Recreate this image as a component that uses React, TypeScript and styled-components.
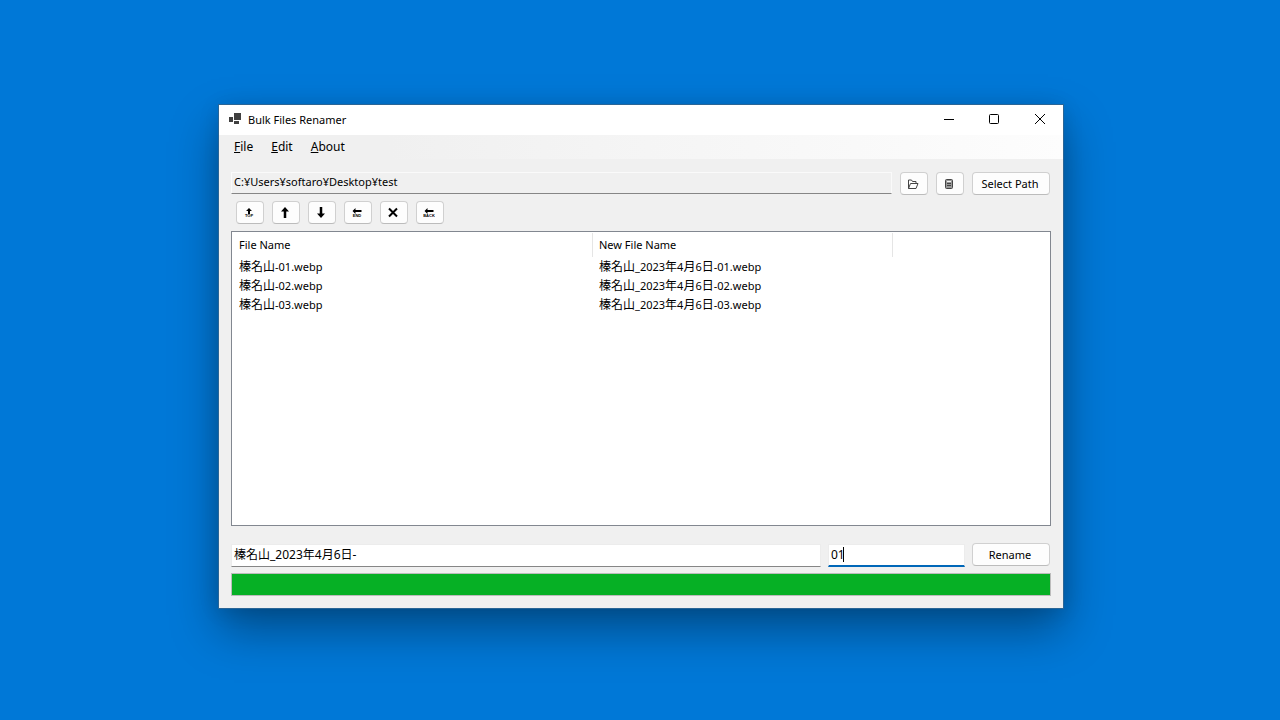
import React from 'react';
import styled, { createGlobalStyle } from 'styled-components';

const Global = createGlobalStyle`
  * { box-sizing: border-box; }
  body { margin: 0; background: #0078d7; }
  body, button, input {
    font-family: "Noto Sans", "Noto Sans CJK JP", sans-serif;
    font-size: 11px;
    line-height: 16px;
    color: #000;
  }
  svg { display: block; flex: none; }
`;

const Desktop = styled.main`
  display: flex;
  min-height: 100vh;
  padding: 105px 217px 112px 219px;
  background: #0078d7;
`;

const Window = styled.section`
  flex: 1;
  display: flex;
  flex-direction: column;
  min-width: 0;
  background: #f0f0f0;
  outline: 1px solid #2a6596;
  box-shadow: 0 22px 44px rgba(0, 0, 0, 0.36), 0 2px 20px rgba(0, 0, 0, 0.12);
`;

const TitleBar = styled.header`
  display: flex;
  align-items: center;
  height: 30px;
  padding-left: 10px;
  background: #fff;
  svg { margin-bottom: 2px; }
`;

const Title = styled.h1`
  flex: 1;
  margin: 0 0 0 7px;
  font-size: 11px;
  font-weight: 400;
`;

const CaptionButton = styled.button`
  display: flex;
  align-items: center;
  justify-content: center;
  width: 46px;
  height: 30px;
  padding: 0;
  border: 0;
  background: transparent;
`;

const MenuBar = styled.nav`
  display: flex;
  gap: 2px;
  height: 24px;
  padding-left: 7px;
  background: linear-gradient(to right, #f0f0f0 20%, #fdfdfd);
`;

const MenuItem = styled.button`
  height: 24px;
  padding: 0 8px;
  border: 0;
  background: transparent;
  font-size: 12px;
`;

const Mnemonic = styled.span`
  text-decoration: underline;
  text-underline-offset: 1px;
`;

const Body = styled.div`
  flex: 1;
  display: flex;
  flex-direction: column;
  padding: 13px 12px 12px;
`;

const Row = styled.div`
  display: flex;
  align-items: flex-start;
  padding-right: 1px;
`;

const PushButton = styled.button<{ $wide?: boolean }>`
  display: flex;
  align-items: center;
  justify-content: center;
  flex: none;
  width: ${(p) => (p.$wide ? 78 : 28)}px;
  height: 23px;
  padding: ${(p) => (p.$wide ? '0 2px 0 0' : '1px 2px 0 0')};
  border: 1px solid #d0d0d0;
  border-bottom-color: #bcbcbc;
  border-radius: 4px;
  background: #fdfdfd;
`;

const PathRow = styled(Row)`
  gap: 8px;
`;

const ToolRow = styled(Row)`
  gap: 8px;
  padding: 6px 5px 7px;
`;

const RenameRow = styled(Row)`
  gap: 7px;
  min-height: 47px;
  padding-top: 17px;
  padding-bottom: 6px;
`;

const Field = styled.input`
  width: 100%;
  height: 23px;
  padding: 0 2px 3px;
  border: 1px solid #ececec;
  border-bottom: 1px solid #868686;
  border-radius: 0;
  outline: none;
  background: #fff;
  font-size: 12px;
`;

const PathField = styled(Field)`
  height: 22px;
  border-color: #fafafa #fafafa #868686;
  background: #f0f0f0;
  font-size: 11px;
`;

const NumberField = styled(Field)`
  padding-bottom: 2px;
  border-bottom: 2px solid #0067b8;
  caret-color: transparent;
`;

const FieldSlot = styled.div<{ $narrow?: boolean }>`
  position: relative;
  display: flex;
  flex: ${(p) => (p.$narrow ? '0 0 137px' : '1')};
  min-width: 0;
  ${RenameRow} & { align-self: flex-end; }
`;

const Caret = styled.span`
  position: absolute;
  left: 15px;
  top: 3px;
  width: 1px;
  height: 15px;
  background: #000;
`;

const ListView = styled.div`
  flex: 1;
  padding-top: 1px;
  border: 1px solid #828790;
  background: #fff;
`;

const Files = styled.table`
  border-collapse: separate;
  border-spacing: 0;
  table-layout: fixed;
  width: 661px;
  text-align: left;
`;

const HeadCell = styled.th<{ $width: number }>`
  width: ${(p) => p.$width}px;
  height: 24px;
  padding: 0 6px 0 7px;
  border-right: 1px solid #e5e5e5;
  font-weight: 400;
  & + & { padding-left: 6px; }
`;

const Cell = styled.td`
  height: 19px;
  padding: 0 6px 0 7px;
  & + & { padding-left: 6px; }
`;

const Kanji = styled.span`
  font-family: "Noto Sans CJK JP", sans-serif;
  font-size: 12px;
`;

const Progress = styled.div`
  height: 23px;
  border: 1px solid #bcbcbc;
  background: #e6e6e6;
`;

const ProgressFill = styled.div`
  height: 100%;
  background: #06b025;
`;

const TinyLabel = styled.text`
  font: 700 4px "Liberation Sans", sans-serif;
  text-anchor: middle;
`;

const AppIcon = () => (
  <svg width="12" height="12" viewBox="0 0 12 12" fill="#404040">
    <path d="M5 0h7v7H5zM0 4h4v5H0zM5 8h5v3H5z" />
  </svg>
);

const FolderIcon = () => (
  <svg width="12" height="12" viewBox="0 0 12 12" fill="none" stroke="#444" strokeLinejoin="round">
    <path d="M1.5 10.5V2h3l1 1.500H9V5M1.500 10.500l2-5H11l-2 5z" />
  </svg>
);

const CalculatorIcon = () => (
  <svg width="12" height="12" viewBox="0 0 12 12">
    <rect x="2.5" y="1.5" width="7" height="9" rx="1" fill="#999" stroke="#444" />
    <path d="M4 3.500h4" stroke="#f4f4f4" />
    <path d="M4 5.500h4M4 7.500h4" stroke="#444" />
  </svg>
);

const UpArrow = () => (
  <svg width="12" height="12" viewBox="0 0 12 12">
    <path d="M6 0l4 4.500H7.250V11h-2.500V4.500H2z" />
  </svg>
);

const DownArrow = () => (
  <svg width="12" height="12" viewBox="0 0 12 12">
    <path d="M6 11l4-4.500H7.250V0h-2.500v6.500H2z" />
  </svg>
);

const TopIcon = () => (
  <svg width="12" height="12" viewBox="0 0 12 12">
    <path d="M6 1l3 3H7v3H5V4H3z" />
    <TinyLabel x="6" y="10">TOP</TinyLabel>
  </svg>
);

const BackIcon = ({ label }: { label: string }) => (
  <svg width="12" height="12" viewBox="0 0 12 12">
    <path d="M1.500 4l3-3v2h6v2h-6v2z" />
    <TinyLabel x="6" y="10">{label}</TinyLabel>
  </svg>
);

const CrossIcon = () => (
  <svg width="12" height="12" viewBox="0 0 12 12" stroke="#000" strokeWidth="2">
    <path d="M2 1.500l8 8M10 1.500l-8 8" />
  </svg>
);

const menus = ['File', 'Edit', 'About'];

const tools = [
  { label: 'Move to top', icon: <TopIcon /> },
  { label: 'Move up', icon: <UpArrow /> },
  { label: 'Move down', icon: <DownArrow /> },
  { label: 'Move to end', icon: <BackIcon label="END" /> },
  { label: 'Remove', icon: <CrossIcon /> },
  { label: 'Back', icon: <BackIcon label="BACK" /> },
];

const numbers = ['01', '02', '03'];

export default function App() {
  return (
    <>
      <Global />
      <Desktop>
        <Window lang="ja">
          <TitleBar>
            <AppIcon />
            <Title>Bulk Files Renamer</Title>
            <CaptionButton aria-label="Minimize">
              <svg width="12" height="12" viewBox="0 0 12 12" stroke="#000"><path d="M2 6.500h10" /></svg>
            </CaptionButton>
            <CaptionButton aria-label="Maximize">
              <svg width="12" height="12" viewBox="0 0 12 12" stroke="#000" fill="none"><rect x="1.500" y="1.500" width="9" height="9" rx="1" /></svg>
            </CaptionButton>
            <CaptionButton aria-label="Close">
              <svg width="12" height="12" viewBox="0 0 12 12" stroke="#000"><path d="M1 1l10 10M11 1L1 11" /></svg>
            </CaptionButton>
          </TitleBar>
          <MenuBar>
            {menus.map((m) => (
              <MenuItem key={m}><Mnemonic>{m[0]}</Mnemonic>{m.slice(1)}</MenuItem>
            ))}
          </MenuBar>
          <Body>
            <PathRow>
              <FieldSlot>
                <PathField readOnly aria-label="Folder path" value="C:¥Users¥softaro¥Desktop¥test" />
              </FieldSlot>
              <PushButton aria-label="Open folder"><FolderIcon /></PushButton>
              <PushButton aria-label="Calculator"><CalculatorIcon /></PushButton>
              <PushButton $wide>Select Path</PushButton>
            </PathRow>
            <ToolRow>
              {tools.map((t) => (
                <PushButton key={t.label} aria-label={t.label}>{t.icon}</PushButton>
              ))}
            </ToolRow>
            <ListView>
              <Files>
                <thead>
                  <tr>
                    <HeadCell $width={361}>File Name</HeadCell>
                    <HeadCell $width={300}>New File Name</HeadCell>
                  </tr>
                </thead>
                <tbody>
                  {numbers.map((n) => (
                    <tr key={n}>
                      <Cell><Kanji>榛名山</Kanji>-{n}.webp</Cell>
                      <Cell>
                        <Kanji>榛名山</Kanji>_2023<Kanji>年</Kanji>4<Kanji>月</Kanji>6<Kanji>日</Kanji>-{n}.webp
                      </Cell>
                    </tr>
                  ))}
                </tbody>
              </Files>
            </ListView>
            <RenameRow>
              <FieldSlot>
                <Field aria-label="New name" defaultValue="榛名山_2023年4月6日-" />
              </FieldSlot>
              <FieldSlot $narrow>
                <NumberField aria-label="Start number" defaultValue="01" />
                <Caret />
              </FieldSlot>
              <PushButton $wide>Rename</PushButton>
            </RenameRow>
            <Progress role="progressbar" aria-label="Rename progress" aria-valuenow={100}>
              <ProgressFill style={{ width: '100%' }} />
            </Progress>
          </Body>
        </Window>
      </Desktop>
    </>
  );
}
